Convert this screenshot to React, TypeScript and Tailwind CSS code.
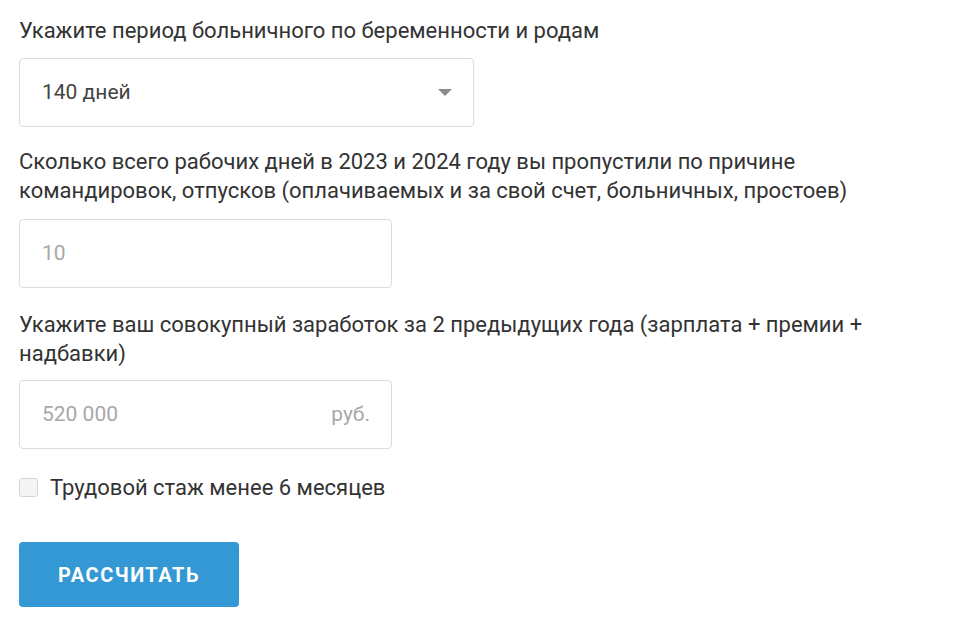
import React, { useState } from 'react';

const App = () => {
  const [checked, setChecked] = useState(false);

  return (
    <div className="min-h-screen bg-white font-['Roboto',sans-serif] text-[#333]">
      <div className="px-[19px] pt-[16px]">
        <label className="block text-[22px] leading-[29px]">Укажите период больничного по беременности и родам</label>
        <div className="mt-[13px] flex h-[69px] w-[455px] items-center justify-between rounded-[4px] border border-[#dcdcdc] pl-[22px] pr-[21px] text-[21px] text-[#444]">
          <span>140 дней</span>
          <svg width="14" height="7" viewBox="0 0 14 7">
            <path d="M0 0h14L7 7z" fill="#8a8a8a" />
          </svg>
        </div>

        <label className="mt-[20px] block text-[22px] leading-[29px]">
          Сколько всего рабочих дней в 2023 и 2024 году вы пропустили по причине
          <br />
          командировок, отпусков (оплачиваемых и за свой счет, больничных, простоев)
        </label>
        <div className="mt-[14px] flex h-[69px] w-[373px] items-center rounded-[4px] border border-[#dcdcdc] pl-[22px] pr-[21px] text-[21px] text-[#a8a8a8]">
          <span>10</span>
        </div>

        <label className="mt-[22px] block text-[22px] leading-[29px]">
          Укажите ваш совокупный заработок за 2 предыдущих года (зарплата + премии +
          <br />
          надбавки)
        </label>
        <div className="mt-[12px] flex h-[69px] w-[373px] items-center justify-between rounded-[4px] border border-[#dcdcdc] pl-[22px] pr-[21px] text-[21px] text-[#a8a8a8]">
          <span>520 000</span>
          <span>руб.</span>
        </div>

        <label
          className="mt-[24px] flex cursor-pointer items-center gap-[12px] text-[22px] leading-[29px]"
          onClick={() => setChecked(!checked)}
        >
          <span className="h-[19px] w-[19px] rounded-[3px] border border-[#d4d4d4] bg-[#f5f5f5]">
            {checked ? (
              <svg viewBox="0 0 19 19" className="h-full w-full">
                <path d="M4 9.5l3.5 3.5L15 5.5" stroke="#3498d4" strokeWidth="2" fill="none" />
              </svg>
            ) : null}
          </span>
          <span>Трудовой стаж менее 6 месяцев</span>
        </label>

        <button className="mt-[40px] h-[65px] w-[220px] rounded-[4px] bg-[#3498d4] text-[20px] font-bold tracking-[1.5px] text-white">
          РАССЧИТАТЬ
        </button>
      </div>
    </div>
  );
};

export default App;
